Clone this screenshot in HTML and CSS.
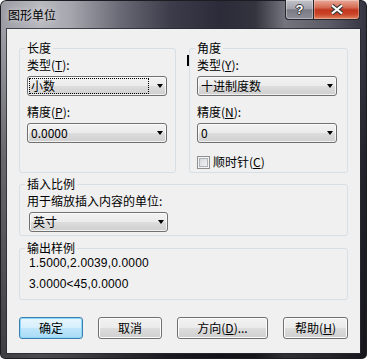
FILE: index.html
```html
<!DOCTYPE html>
<html lang="zh-CN">
<head>
<meta charset="utf-8">
<title>图形单位</title>
<link rel="stylesheet" href="styles.css">
</head>
<body>
<div class="window">
  <div class="titlebar">
    <span class="title">图形单位</span>
    <div class="caption-btns">
      <div class="cbtn help"><span class="qmark">?</span></div>
      <div class="cbtn close">
        <svg width="14" height="11" viewBox="0 0 14 11"><path d="M2 1.5L12 9.5M12 1.5L2 9.5" stroke="#3a3a3a" stroke-width="4.2" fill="none"/><path d="M2 1.5L12 9.5M12 1.5L2 9.5" stroke="#ffffff" stroke-width="2.2" fill="none"/></svg>
      </div>
    </div>
  </div>
  <div class="client">
    <div class="top-row">
      <fieldset class="group group-left">
        <legend>长度</legend>
        <div class="label">类型(<u>T</u>):</div>
        <div class="select focus"><span class="val">小数</span><span class="arrow"></span></div>
        <div class="label label-gap">精度(<u>P</u>):</div>
        <div class="select"><span class="val">0.0000</span><span class="arrow"></span></div>
      </fieldset>
      <fieldset class="group group-right">
        <legend>角度</legend>
        <span class="caret"></span>
        <div class="label">类型(<u>Y</u>):</div>
        <div class="select"><span class="val">十进制度数</span><span class="arrow"></span></div>
        <div class="label label-gap">精度(<u>N</u>):</div>
        <div class="select"><span class="val">0</span><span class="arrow"></span></div>
        <div class="check-row"><span class="checkbox"></span><span>顺时针(<u>C</u>)</span></div>
      </fieldset>
    </div>
    <fieldset class="group group-insert">
      <legend>插入比例</legend>
      <div class="label">用于缩放插入内容的单位:</div>
      <div class="select select-wide"><span class="val">英寸</span><span class="arrow"></span></div>
    </fieldset>
    <fieldset class="group group-output">
      <legend>输出样例</legend>
      <div class="sample">1.5000,2.0039,0.0000</div>
      <div class="sample sample-2">3.0000&lt;45,0.0000</div>
    </fieldset>
    <div class="buttons">
      <div class="btn btn-default w64">确定</div>
      <div class="btn w64">取消</div>
      <div class="btn w91">方向(<u>D</u>)...</div>
      <div class="btn w65">帮助(<u>H</u>)</div>
    </div>
  </div>
</div>
</body>
</html>
```
FILE: styles.css
```css
* { box-sizing: border-box; }
html, body { margin: 0; padding: 0; }
body {
  width: 368px;
  height: 359px;
  overflow: hidden;
  background: #ffffff;
  font-family: "Noto Sans CJK SC", "Noto Sans", sans-serif;
  font-size: 12px;
  line-height: 14px;
  color: #000;
}
u { text-decoration: underline; text-underline-offset: 1px; }

.window {
  width: 367px;
  height: 359px;
  border-radius: 6px 6px 5px 5px;
  padding: 0 7px 6px 7px;
  display: flex;
  flex-direction: column;
  background:
    linear-gradient(to bottom, rgba(0,0,0,0) 0, rgba(0,0,0,0) 30px, rgba(0,0,0,0.35) 160px, rgba(0,0,0,0.6) 359px),
    linear-gradient(to right, #9a9aa2 0, #b9b9c0 40px, #a6a6ae 70px, #6a6a76 120px, #3c3c4a 170px, #2b2b39 220px, #34343f 255px, #74747e 285px, #5a5a66 330px, #333341 367px);
  box-shadow: inset 0 0 0 1px #1c1c22;
}

.titlebar {
  height: 29px;
  margin: 0 -7px;
  padding: 0 7px 0 8px;
  display: flex;
  justify-content: space-between;
  align-items: flex-start;
  flex: none;
}
.title {
  margin-top: 8px;
  color: #000;
  text-shadow: 0 0 6px rgba(255,255,255,0.8);
}
.caption-btns { display: flex; }
.cbtn {
  height: 20px;
  display: flex;
  align-items: center;
  justify-content: center;
  border: 1px solid #26262c;
  border-top: none;
}
.help {
  width: 28px;
  border-right: none;
  border-radius: 0 0 0 4px;
  background: linear-gradient(#c4c4cb 0, #a2a2ab 45%, #7a7a84 52%, #8e8e98 100%);
  box-shadow: inset 0 0 0 1px rgba(255,255,255,0.35);
}
.qmark {
  font-family: "Liberation Sans", sans-serif;
  font-weight: bold;
  font-size: 13px;
  line-height: 13px;
  color: #fff;
  text-shadow: -1px 0 #333, 1px 0 #333, 0 -1px #333, 0 1px #333;
}
.close {
  width: 47px;
  border-radius: 0 0 4px 0;
  background: linear-gradient(#e9ab9a 0, #d66a52 40%, #c2361f 52%, #c94428 75%, #e08660 100%);
  box-shadow: inset 0 0 0 1px rgba(255,255,255,0.3);
}

.client {
  width: 353px;
  height: 324px;
  background: #f0f0f0;
  box-shadow: 0 0 0 1px rgba(40,40,48,0.8);
  padding: 12px 12px 15px 12px;
  display: flex;
  flex-direction: column;
}

.group {
  margin: 0;
  padding: 3px 7px 3px 7px;
  border: 1px solid #d5dfe5;
  border-radius: 3px;
  min-width: 0;
  position: relative;
}
.group legend {
  padding: 0 2px;
  margin-left: -2px;
  line-height: 14px;
}

.top-row {
  display: flex;
  gap: 13px;
  align-items: stretch;
}
.group-left { width: 157px; flex: none; }
.group-right { width: 159px; flex: none; }

.caret {
  position: absolute;
  left: -3px;
  top: 0;
  width: 2px;
  height: 11px;
  background: #000;
}

.label { height: 14px; white-space: nowrap; }
.label-gap { margin-top: 9px; }

.select {
  width: 140px;
  height: 20px;
  margin-top: 4px;
  border: 1px solid #707070;
  border-radius: 3px;
  background: linear-gradient(#f2f2f2 0, #ebebeb 50%, #dddddd 50%, #cfcfcf 100%);
  box-shadow: inset 0 0 0 1px rgba(255,255,255,0.7);
  display: flex;
  align-items: center;
  padding: 0 2px 0 1px;
}
.select .val {
  width: 120px;
  height: 16px;
  line-height: 14px;
  padding: 0 1px;
  border: 1px dotted transparent;
  white-space: nowrap;
  margin-right: 8px;
}
.select.focus .val { border-color: #000; }
.arrow {
  width: 0;
  height: 0;
  border-top: 4px solid #000;
  border-left: 3.5px solid transparent;
  border-right: 3.5px solid transparent;
}
.select-wide { width: 139px; margin-left: 2px; }
.select-wide .val { width: 119px; }

.check-row {
  margin-top: 12px;
  height: 14px;
  display: flex;
  align-items: center;
  gap: 3px;
}
.checkbox {
  width: 13px;
  height: 13px;
  border: 1px solid #8e8f8f;
  background: linear-gradient(135deg, #cfd1d4 0, #e8e9ea 60%, #f6f6f6 100%);
  box-shadow: inset 0 0 0 1px #f4f4f4, inset 0 0 0 2px #aeb3b9;
}

.group-insert { margin-top: 4px; padding-bottom: 3px; }
.group-output { margin-top: 5px; padding-top: 1px; padding-bottom: 8px; }
.sample {
  padding-left: 2px;
  height: 14px;
  white-space: nowrap;
  font-family: "Liberation Sans", "Noto Sans CJK SC", sans-serif;
  letter-spacing: 0.15px;
}
.sample-2 { margin-top: 7px; }

.buttons {
  margin-top: 17px;
  display: flex;
  justify-content: space-between;
}
.btn {
  height: 22px;
  border: 1px solid #707070;
  border-radius: 3px;
  background: linear-gradient(#f2f2f2 0, #ebebeb 50%, #dddddd 50%, #cfcfcf 100%);
  box-shadow: inset 0 0 0 1px #fcfcfc;
  display: flex;
  align-items: center;
  justify-content: center;
  white-space: nowrap;
}
.btn-default {
  border-color: #3c7fb1;
  background: linear-gradient(#e8f6fd 0, #d6effc 50%, #bfe6fa 50%, #aadcf6 100%);
  box-shadow: inset 0 0 0 1px #8fd7f8;
}
.w64 { width: 64px; }
.w91 { width: 91px; }
.w65 { width: 65px; }
```
